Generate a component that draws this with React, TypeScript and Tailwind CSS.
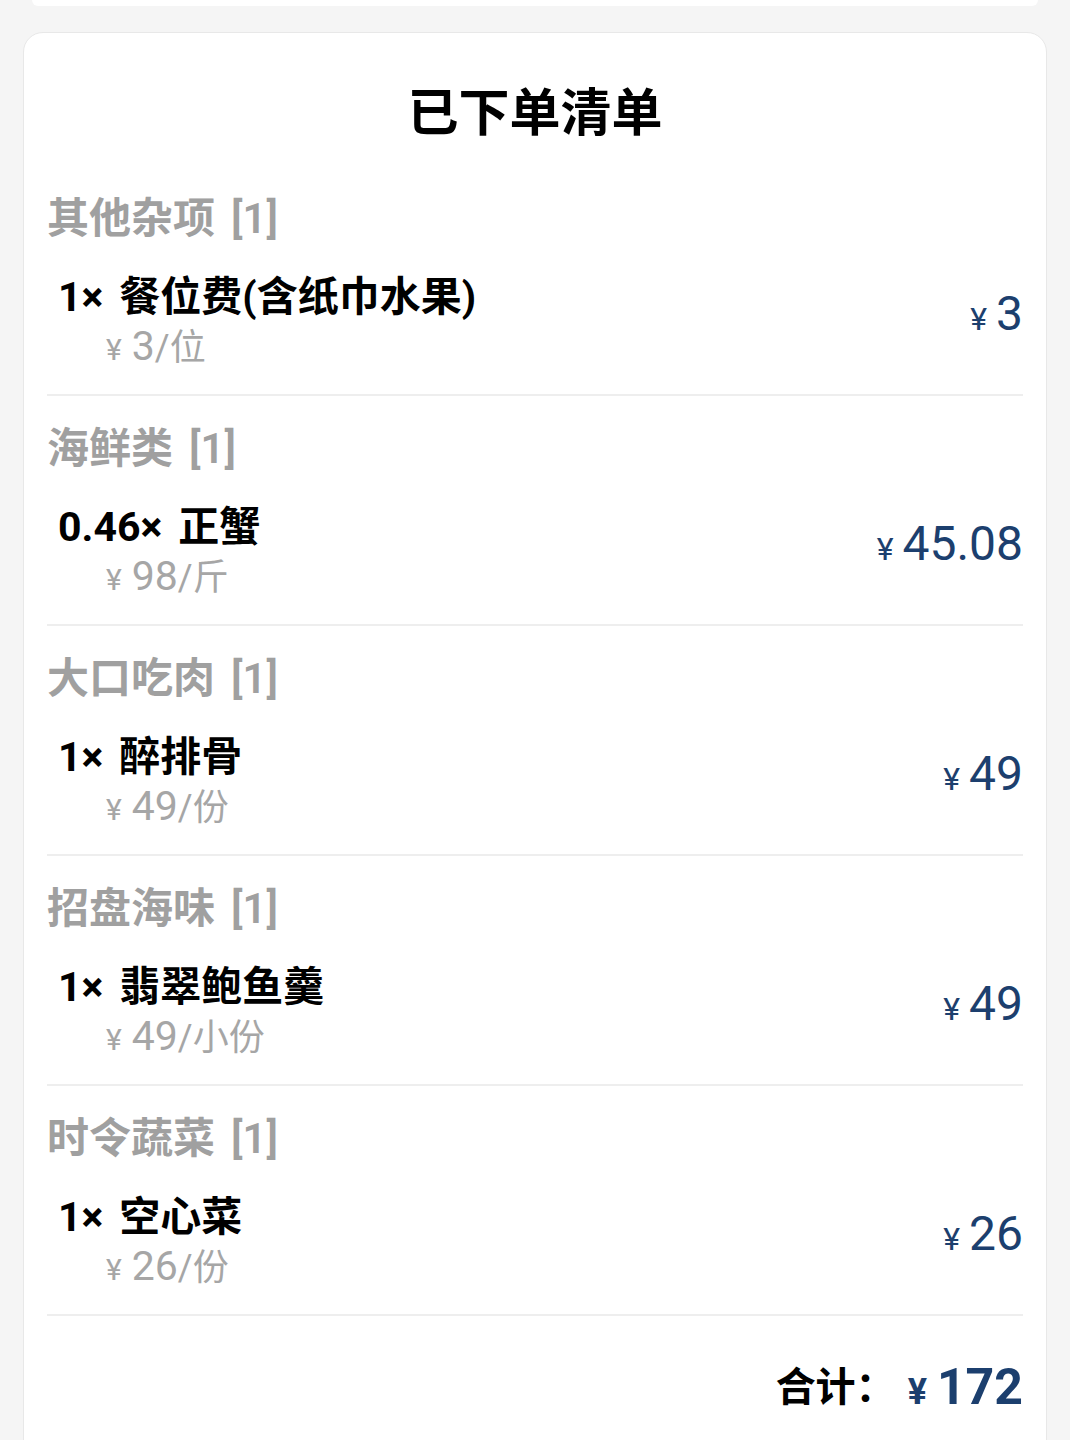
import React from 'react';

type Item = {
  qty: string;
  name: string;
  price: string;
  unit: string;
  total: string;
};

type Section = {
  title: string;
  items: Item[];
};

const sections: Section[] = [
  { title: '其他杂项', items: [{ qty: '1×', name: '餐位费(含纸巾水果)', price: '3', unit: '位', total: '3' }] },
  { title: '海鲜类', items: [{ qty: '0.46×', name: '正蟹', price: '98', unit: '斤', total: '45.08' }] },
  { title: '大口吃肉', items: [{ qty: '1×', name: '醉排骨', price: '49', unit: '份', total: '49' }] },
  { title: '招盘海味', items: [{ qty: '1×', name: '翡翠鲍鱼羹', price: '49', unit: '小份', total: '49' }] },
  { title: '时令蔬菜', items: [{ qty: '1×', name: '空心菜', price: '26', unit: '份', total: '26' }] },
];

const font = { fontFamily: 'Roboto, "Noto Sans CJK SC", "Noto Sans", sans-serif' };

function OrderSection({ section, first }: { section: Section; first: boolean }) {
  return (
    <div>
      {!first && <div className="h-[2px] bg-[#eeeeee]" />}
      <div className="pt-[23px] pb-[24px]">
        {/* Category header */}
        <div className="h-[60px] leading-[60px] text-[42px] font-semibold text-[#a0a0a0] whitespace-nowrap">
          {section.title}
          <span className="ml-[16px]">[{section.items.length}]</span>
        </div>

        {section.items.map((item) => (
          <div key={item.name} className="mt-[22px] flex items-center justify-between">
            <div className="pl-[11px]">
              <div className="h-[52px] leading-[52px] text-[41px] font-bold text-black whitespace-nowrap">
                <span className="mr-[16px]">{item.qty}</span>
                {item.name}
              </div>
              <div className="-mt-[1px] h-[48px] leading-[48px] pl-[48px] text-[#a6a6a6] whitespace-nowrap">
                <span className="text-[30px] mr-[10px]">¥</span>
                <span className="text-[41px]">{item.price}</span>
                <span className="text-[36px]">/{item.unit}</span>
              </div>
            </div>
            <div className="text-[#1c3f6e] whitespace-nowrap -mt-[14px]">
              <span className="text-[32px] mr-[9px]">¥</span>
              <span className="text-[48px]">{item.total}</span>
            </div>
          </div>
        ))}
      </div>
    </div>
  );
}

export default function App() {
  return (
    <div className="min-h-[1440px] bg-[#f5f5f5] overflow-hidden" style={font}>
      {/* Bottom edge of the card above */}
      <div className="mx-[32px] h-[6px] rounded-b-[14px] bg-white" />

      <div className="mx-[23px] mt-[26px] rounded-[20px] border border-[#e8e8e8] bg-white px-[23px] pb-[40px]">
        <h1 className="pt-[51px] h-[60px] box-content leading-[60px] text-center text-[51px] font-bold text-black">
          已下单清单
        </h1>
        <div className="mt-[22px]">
          {sections.map((s, i) => (
            <OrderSection key={s.title} section={s} first={i === 0} />
          ))}
          <div className="h-[2px] bg-[#eeeeee]" />
        </div>

        {/* Total */}
        <div className="mt-[34px] flex items-center justify-end whitespace-nowrap">
          <span className="text-[40px] font-bold text-black">合计：</span>
          <span className="ml-[12px] text-[#1c3f6e] font-bold">
            <span className="text-[36px] mr-[10px]">¥</span>
            <span className="text-[50px]">172</span>
          </span>
        </div>
      </div>
    </div>
  );
}
